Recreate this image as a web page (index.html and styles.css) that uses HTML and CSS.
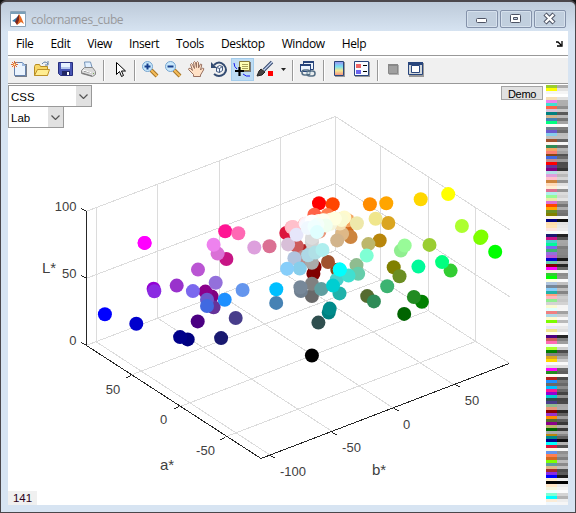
FILE: index.html
```html
<!DOCTYPE html>
<html lang="en">
<head>
<meta charset="utf-8">
<title>colornames_cube</title>
<link rel="stylesheet" href="styles.css">
</head>
<body>
<div class="window">
  <header class="titlebar">
    <svg class="app-icon" width="16" height="16" viewBox="0 0 16 16"><path fill="#fff" stroke="#8ba3b8" d="M.5.5h15v15H.5z"/><path fill="#799fb8" d="M1 1h14v2H1z"/><path fill="#3478a8" d="m2 10 4-3 3-3-2 8-2-1z"/><path fill="#7b251b" d="m5 11 3-6 1-2 1 7-3 4z"/><path fill="#e56b24" d="m9 3 2 3 3 7-3-2-4 3 2-5z"/></svg>
    <span class="caption">colornames_cube</span>
    <div class="window-buttons">
      <span class="wbtn"><svg width="30" height="16"><rect x="9.500" y="7.500" width="10" height="4" rx="1" fill="#fff" stroke="#4d5364"/></svg></span>
      <span class="wbtn"><svg width="30" height="16"><rect x="9.500" y="3.500" width="10" height="8" rx="1" fill="#fff" stroke="#4d5364"/><path fill="#c5d2e0" stroke="#4d5364" d="M12.500 6.500h4v2h-4z"/></svg></span>
      <span class="wbtn"><svg width="30" height="16"><path stroke="#4d5364" stroke-width="4.400" d="m10 3 9 9m0-9-9 9"/><path stroke="#fff" stroke-width="2.400" d="m10.500 3.500 8 8m0-8-8 8"/></svg></span>
    </div>
  </header>
  <main class="client">
    <nav class="menu">
      <span>File</span><span>Edit</span><span>View</span><span>Insert</span><span>Tools</span><span>Desktop</span><span>Window</span><span>Help</span>
      <svg class="dock-arrow" width="7" height="6"><path fill="none" stroke="#000" stroke-width="1.300" d="M0 1h2l3 3M6 0v5H1"/></svg>
    </nav>
    <div class="toolbar">
      <span class="tool"><svg width="16" height="16"><path fill="#777e8a" d="M4 3h12v13H4z"/><path fill="#eaf3fd" stroke="#6682ac" d="M3.500 1.500h8l3 3v10h-11z"/><path fill="#9fbbe0" d="M11 1v4h4z"/><path stroke="#df672e" d="M0 3.500h7M3.500 0v7M1 1l5 5m0-5L1 6"/><circle cx="3.500" cy="3.500" r="1" fill="#fff8b0"/></svg></span>
      <span class="tool"><svg width="16" height="16"><path fill="#f8d767" stroke="#b68c22" d="M.5 14.500v-9l1-2h4l1 2h7v9z"/><path fill="#ffed91" stroke="#bd922a" d="m.5 14.500 3-6h12l-2 6z"/><path fill="none" stroke="#607fa6" d="M8 3q3-4 6 0m0-3v4h-3"/></svg></span>
      <span class="tool"><svg width="16" height="16"><path fill="#4856b5" stroke="#272e7e" d="M1.500 1.500h14v13h-12l-2-2z"/><path fill="#e7f2ff" d="M4 2h9v6H4z"/><path fill="#b6c8ed" d="M4 6h9v2H4z"/><path fill="#202663" d="M5 10h8v4H5z"/><path fill="#fff" d="M10 11h2v3h-2z"/></svg></span>
      <span class="tool"><svg width="16" height="16"><path fill="#e2f0ff" stroke="#7694b8" d="m5.500 8-1-7h6l2 7z"/><path fill="#dadada" stroke="#888" d="m1.500 9.500 3-3h8l3 4v3l-3 2-11-3z"/><path stroke="#777" d="m2 12 10 3m-8-5 8 2"/><path stroke="#fff" d="m3 9 9 3"/><path fill="#7a5" d="M13 12h1v1h-1z"/></svg></span>
      <i class="sep"></i>
      <span class="tool"><svg width="16" height="16"><path fill="#fff" stroke="#000" d="M5.500 1.500v12l3-3 2 5 2-1-2-4.500h4z"/></svg></span>
      <i class="sep"></i>
      <span class="tool"><svg width="16" height="16"><path stroke="#a67728" stroke-width="4" d="m9 9 6 6"/><path stroke="#f6bd5b" stroke-width="2" d="m9 9 6 6"/><circle cx="5.500" cy="5.500" r="5" fill="#c9e8fb" stroke="#76a5d0"/><path stroke="#173f8d" stroke-width="2" d="M2.500 5.500h6m-3-3v6"/></svg></span>
      <span class="tool"><svg width="16" height="16"><path stroke="#a67728" stroke-width="4" d="m9 9 6 6"/><path stroke="#f6bd5b" stroke-width="2" d="m9 9 6 6"/><circle cx="5.500" cy="5.500" r="5" fill="#c9e8fb" stroke="#76a5d0"/><path stroke="#173f8d" stroke-width="2" d="M2.500 5.500h6"/></svg></span>
      <span class="tool"><svg width="16" height="16"><path fill="#ffe1c6" stroke="#987060" d="M5.500 15.500v-2l-5-5q0-2 2-1l2 2-2-6q1-2 2 0l2 4-1-6q1-2 2 0l1 5V1.500q1-2 2 0V7l2-4q2 0 1 2l-1 4 2-2q2 0 1 2l-3 5v1.500z"/></svg></span>
      <span class="tool"><svg width="16" height="16"><path fill="none" stroke="#344c72" stroke-width="2" d="M3 4q5-5 10 0 4 5 0 9-5 4-10 0"/><path fill="#344c72" d="M0 1v6h6z"/><path fill="#eef5ff" stroke="#425980" d="m5.500 6.500 3-2 3 1v4l-3 2-3-1zm0 0 3 1 3-2m-3 2v4"/></svg></span>
      <span class="tool active"><svg width="16" height="16"><path fill="none" stroke="#1717ee" d="M0 2q0 4 3 6m6 5q3 3 7 2"/><path fill="#777" d="M6 1h11v10H6z"/><path fill="#ffffb5" stroke="#887a3c" d="M5.500.5h10v9h-10z"/><path stroke="#aaa35b" d="M8 3.500h6m-6 2h6m-6 2h6"/><path stroke="#000" stroke-width="2.200" d="M1 10h9m-4.500-4v9"/></svg></span>
      <span class="tool"><svg width="17" height="16"><path stroke="#35486e" stroke-width="3.400" d="m7 9 8-8"/><path stroke="#c6d5f2" stroke-width="1.300" d="m7 9 8-8"/><path fill="#444" stroke="#252525" d="m4 8 4 3-3 3-5 1 2-5z"/><path fill="#f00" d="M11 10h5v5h-5z"/></svg></span>
      <span class="tool drop"><svg width="5" height="3"><path fill="#222" d="M0 0h5L2.500 3z"/></svg></span>
      <i class="sep"></i>
      <span class="tool"><svg width="16" height="16"><path fill="#eaf2fc" stroke="#27447b" d="M3.500.5h10v8h-10z"/><path fill="#27447b" d="M3 0h11v2H3z"/><path fill="#eef6ff" stroke="#27447b" d="M.5 3.500h10v7H.5z"/><path fill="#27447b" d="M0 3h11v2H0z"/><g fill="none" stroke="#567086" stroke-width="1.600"><rect x="2" y="9" width="8" height="5" rx="2.500"/><rect x="7" y="10" width="8" height="5" rx="2.500"/></g><path stroke="#d6e7ee" d="M5 12h8"/></svg></span>
      <i class="sep"></i>
      <span class="tool"><svg width="16" height="16"><defs><linearGradient id="cb" x2="0" y2="1"><stop stop-color="#9c8ff0"/><stop offset=".35" stop-color="#77dff4"/><stop offset=".65" stop-color="#f3e992"/><stop offset="1" stop-color="#f48b80"/></linearGradient></defs><path fill="#999" d="M4 1h10v15H4z"/><path fill="url(#cb)" stroke="#29467d" d="M3.500.5h9v14h-9z"/></svg></span>
      <span class="tool"><svg width="16" height="16"><path fill="#999" d="M1 1h15v15H1z"/><path fill="#f8fbff" stroke="#29467d" d="M.5.5h14v14H.5z"/><path fill="#ef6564" d="M2 3h5v4H2z"/><path fill="#6b64ed" d="M2 9h5v4H2z"/><path stroke="#000" d="M9 4.500h4m-4 6h4"/></svg></span>
      <i class="sep"></i>
      <span class="tool"><svg width="16" height="16"><path fill="#b2b2b2" d="M4 4h10v10H4z"/><path fill="#a0a0a0" stroke="#888" d="M3.500 3.500h9v9h-9z"/><path fill="#888" d="M3 3h10v2H3z"/></svg></span>
      <span class="tool"><svg width="16" height="16"><path fill="#999" d="M1 2h15v14H1z"/><path fill="#d2d7db" stroke="#29467d" d="M.5 1.500h14v12H.5z"/><path fill="#29467d" d="M0 1h15v3H0z"/><path fill="#fff" stroke="#29467d" d="M3.500 4.500h8v7h-8z"/></svg></span>
    </div>
    <section class="figure">
      <svg class="plot" id="plot" width="538" height="421" viewBox="8 84 538 421">
        <g class="grid">
          <path d="M86 211.500 335.500 116.500 510 230M86 278.500 335.500 183.500 510 297M86 345.500 335.500 250.500 509 363"/>
          <path d="M96.500 208V342M157.500 184V318M219.500 161V294.500M280.500 137.500V271M335.500 116.500V250.500M380.500 146V280M428.500 177V310.500M475.500 207.500V341.500"/>
          <path d="M96.500 342 270 455M157.500 318 333 432M219.500 294.500 394 408.500M280.500 271 454 385M131 375 380.500 280M179 407 428.500 310.500M225 437 475.500 341.500"/>
        </g>
        <path class="axis" d="M86.500 211V345.500L261 458.500 509 363.500M86.500 211.500l-5-3M86.500 278.500l-5-3M86.500 345.500l-5-3M131.500 375.500l-5 2M179.500 406.500l-5 2M225.500 437.500l-5 2M270.500 455.500l5 3M332.500 432.500l5 3M394.500 408.500l5 3M455.500 384.500l5 3"/>
        <g id="markers"></g>
        <g class="ticks">
          <text class="end" x="76.500" y="210.500">100</text><text class="end" x="76.500" y="278">50</text><text class="end" x="76.500" y="345">0</text>
          <text x="113" y="394">50</text><text x="163.500" y="424">0</text><text x="205.500" y="455">-50</text>
          <text x="293" y="476">-100</text><text x="351.500" y="452">-50</text><text x="406.500" y="429">0</text><text x="472" y="405">50</text>
        </g>
        <g class="labels"><text x="49" y="273">L*</text><text x="167" y="470">a*</text><text x="379" y="475">b*</text></g>
      </svg>
      <div class="selects">
        <div class="select scheme"><span>CSS</span><b><svg width="9" height="5"><path fill="none" stroke="#555" stroke-width="1.200" d="m.5.5 4 4 4-4"/></svg></b></div>
        <div class="select space"><span>Lab</span><b><svg width="9" height="5"><path fill="none" stroke="#555" stroke-width="1.200" d="m.5.5 4 4 4-4"/></svg></b></div>
        <output class="count">141</output>
      </div>
      <div class="demo">Demo</div>
      <svg class="bars" id="bars" width="22" height="420" viewBox="0 0 22 141" preserveAspectRatio="none"></svg>
    </section>
  </main>
</div>
<script src="script.js"></script>
</body>
</html>
```
FILE: styles.css
```css
* { box-sizing: border-box; }
body { margin: 0; background: #111; overflow: hidden; }
.window {
  width: 576px;
  height: 513px;
  padding: 0 7px 7px;
  border: 1px solid #4b474b;
  border-top-width: 2px;
  border-radius: 6px 6px 0 0;
  background: linear-gradient(#bdcad9, #d7e4f2 30px);
}
.titlebar { height: 29px; display: flex; align-items: flex-start; padding: 9px 2px 0; }
.app-icon { flex: none; }
.caption { margin-left: 5px; font: 12px/17px "Open Sans", sans-serif; letter-spacing: -0.4px; color: #98999c; flex: 1; }
.window-buttons { display: flex; gap: 2px; margin-top: -1px; }
.wbtn { width: 32px; height: 18px; border: 1px solid #8492aa; border-radius: 2px; box-shadow: inset 0 0 0 1px #d6e1ed; background: #c1cfde; }
.wbtn svg { display: block; }
.client { height: 474px; width: 560px; background: #fff; }
.menu { height: 27px; display: flex; align-items: center; gap: 17px; padding: 0 5px 0 8px; border-bottom: 2px solid #fff; font: 12px "Open Sans", sans-serif; letter-spacing: -0.38px; color: #000; box-shadow: inset 0 -1px #999; }
.dock-arrow { margin-left: auto; }
.toolbar { height: 26px; display: flex; background: #f0f0f0; border-bottom: 1px solid #999; }
.tool { width: 23px; height: 23px; padding: 3px 0 0 3px; }
.tool svg { display: block; overflow: visible; }
.tool.active { background: #bedcf3; box-shadow: inset 0 0 0 1px #a5cdec; }
.tool.drop { width: 12px; padding: 10px 0 0 4px; }
.sep { width: 8px; height: 21px; margin-top: 2px; border-left: 3px solid #f0f0f0; background: linear-gradient(90deg, #999 1px, #fff 1px 2px, #f0f0f0 2px); }
.figure { position: relative; height: 421px; display: flex; align-items: flex-start; }
.plot { position: absolute; left: 0; top: 0; }
.selects { position: relative; display: flex; flex-direction: column; height: 421px; padding-top: 1px; flex: 1; font: 12px "Liberation Sans", sans-serif; }
.select { height: 22px; border: 1px solid #999; display: flex; background: #fff; }
.select span { flex: 1; padding-left: 2px; line-height: 23px; font-size: 11.500px; }
.select b { width: 15px; background: #e1e1e1; display: flex; align-items: center; justify-content: center; }
.scheme { width: 84px; }
.space { width: 56px; margin-top: -1px; }
.count { width: 29px; height: 14px; margin-top: auto; background: #f0f0f0; color: #2b0018; text-align: center; font-size: 11.500px; line-height: 15px; }
.demo { position: relative; width: 42px; height: 14px; margin: 2px 3px 0 0; border: 1px solid #a4a4a4; background: #e1e1e1; font: 11px/14px "Liberation Sans", sans-serif; letter-spacing: -0.3px; text-align: center; }
.bars { flex: none; margin-top: 1px; display: block; shape-rendering: crispEdges; }
.grid { fill: none; stroke: #dcdcdc; shape-rendering: crispEdges; }
.axis { fill: none; stroke: #262626; shape-rendering: crispEdges; }
.ticks, .labels { font-family: "Liberation Sans", sans-serif; font-size: 13px; fill: #404040; text-anchor: middle; }
.ticks .end { text-anchor: end; }
.labels { font-size: 15px; }
```
FILE: script.js
```js
// CSS colour names, in alphabetical order.
const names = `aliceblue antiquewhite aqua aquamarine azure beige bisque black blanchedalmond blue blueviolet brown burlywood cadetblue chartreuse chocolate coral cornflowerblue cornsilk crimson cyan darkblue darkcyan darkgoldenrod darkgray darkgreen darkkhaki darkmagenta darkolivegreen darkorange darkorchid darkred darksalmon darkseagreen darkslateblue darkslategray darkturquoise darkviolet deeppink deepskyblue dimgray dodgerblue firebrick floralwhite forestgreen fuchsia gainsboro ghostwhite gold goldenrod gray green greenyellow honeydew hotpink indianred indigo ivory khaki lavender lavenderblush lawngreen lemonchiffon lightblue lightcoral lightcyan lightgoldenrodyellow lightgray lightgreen lightpink lightsalmon lightseagreen lightskyblue lightslategray lightsteelblue lightyellow lime limegreen linen magenta maroon mediumaquamarine mediumblue mediumorchid mediumpurple mediumseagreen mediumslateblue mediumspringgreen mediumturquoise mediumvioletred midnightblue mintcream mistyrose moccasin navajowhite navy oldlace olive olivedrab orange orangered orchid palegoldenrod palegreen paleturquoise palevioletred papayawhip peachpuff peru pink plum powderblue purple rebeccapurple red rosybrown royalblue saddlebrown salmon sandybrown seagreen seashell sienna silver skyblue slateblue slategray snow springgreen steelblue tan teal thistle tomato turquoise violet wheat white whitesmoke yellow yellowgreen`.split(' ');

const ns = 'http://www.w3.org/2000/svg';
function add(parent, tag, attrs) {
  const el = document.createElementNS(ns, tag);
  for (const k in attrs) el.setAttribute(k, attrs[k]);
  parent.appendChild(el);
}
function rgbOf(name) {
  document.body.style.color = name;
  return getComputedStyle(document.body).color.match(/\d+/g).map(Number);
}
// sRGB to CIE Lab, D65 white.
function lab(rgb) {
  const [r, g, b] = rgb.map(v => (v /= 255) > 0.04045 ? ((v + 0.055) / 1.055) ** 2.4 : v / 12.92);
  const f = t => t > 0.008856 ? Math.cbrt(t) : 7.787 * t + 16 / 116;
  const x = f((0.4124 * r + 0.3576 * g + 0.1805 * b) / 0.9505);
  const y = f(0.2126 * r + 0.7152 * g + 0.0722 * b);
  const z = f((0.0193 * r + 0.1192 * g + 0.9505 * b) / 1.089);
  return [116 * y - 16, 500 * (x - y), 200 * (y - z)];
}
const colors = names.map(name => {
  const rgb = rgbOf(name);
  const [L, a, b] = lab(rgb);
  return {
    name,
    gray: Math.round(0.299 * rgb[0] + 0.587 * rgb[1] + 0.114 * rgb[2]),
    x: 311.9 - 0.942 * a + 1.228 * b,
    y: 355.5 - 0.615 * a - 0.471 * b - 1.34 * L,
    near: 0.5 * L - 0.687 * a - 0.527 * b
  };
});
document.body.style.color = '';

const bars = document.getElementById('bars');
[...colors].reverse().forEach((c, i) => {
  add(bars, 'rect', { x: 0, y: i, width: 11, height: 1, fill: c.name });
  add(bars, 'rect', { x: 11, y: i, width: 11, height: 1, fill: `rgb(${c.gray},${c.gray},${c.gray})` });
});
// Farthest markers first.
const markers = document.getElementById('markers');
[...colors].sort((p, q) => p.near - q.near).forEach(c => {
  add(markers, 'circle', { cx: c.x.toFixed(1), cy: c.y.toFixed(1), r: 7, fill: c.name });
});
```
